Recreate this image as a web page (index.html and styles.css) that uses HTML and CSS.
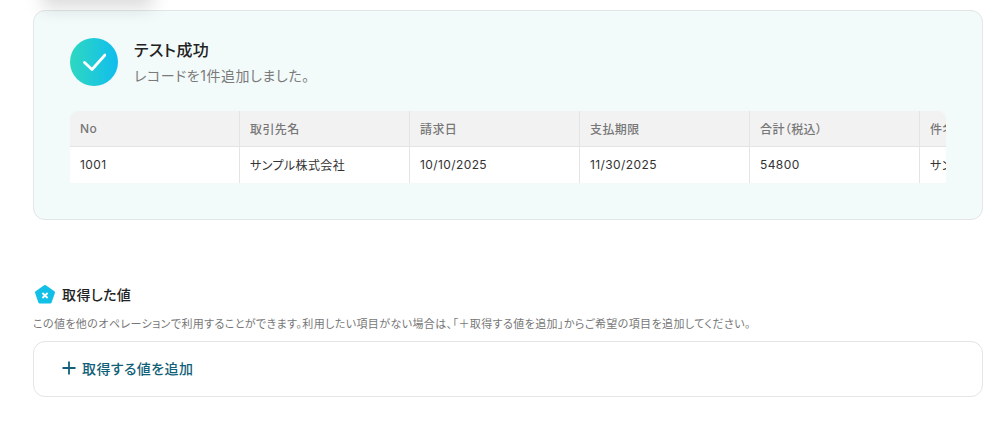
FILE: index.html
```html
<!DOCTYPE html>
<html lang="ja">
<head>
    <meta charset="utf-8">
    <title>取得した値</title>
    <link rel="stylesheet" href="styles.css">
</head>
<body>
    <div class="top-shadow"></div>
    <div class="result-card">
        <div class="result-head">
            <div class="check-icon">
                <svg width="24" height="24" viewBox="0 0 24 24" fill="none">
                    <path d="M2.5 12.5L10 19.5L23 5" stroke="#fff" stroke-width="2.8" stroke-linecap="round" stroke-linejoin="round"/>
                </svg>
            </div>
            <div class="result-text">
                <div class="result-title">テスト成功</div>
                <div class="result-sub">レコードを1件追加しました。</div>
            </div>
        </div>
        <div class="table-wrap">
            <table class="record-table">
                <thead>
                    <tr>
                        <th>No</th>
                        <th>取引先名</th>
                        <th>請求日</th>
                        <th>支払期限</th>
                        <th>合計（税込）</th>
                        <th>件名</th>
                    </tr>
                </thead>
                <tbody>
                    <tr>
                        <td>1001</td>
                        <td>サンプル株式会社</td>
                        <td>10/10/2025</td>
                        <td>11/30/2025</td>
                        <td>54800</td>
                        <td>サンプル</td>
                    </tr>
                </tbody>
            </table>
        </div>
    </div>

    <div class="section-head">
        <svg class="x-icon" width="22" height="22" viewBox="0 0 22 22">
            <path d="M11 3.5L19.5 9.5L16.2 19H5.8L2.5 9.5z" fill="#12bfe6" stroke="#12bfe6" stroke-width="3" stroke-linejoin="round"/>
            <path d="M8.4 10l5.2 5M13.6 10l-5.2 5" stroke="#fff" stroke-width="1.8"/>
        </svg>
        <span class="section-title">取得した値</span>
    </div>
    <p class="section-note">この値を他のオペレーションで利用することができます。利用したい項目がない場合は、「＋取得する値を追加」からご希望の項目を追加してください。</p>
    <div class="add-box">
        <svg width="14" height="14" viewBox="0 0 14 14" fill="none">
            <path d="M7 .5v13M.5 7h13" stroke="#125f78" stroke-width="1.8"/>
        </svg>
        <span class="add-label">取得する値を追加</span>
    </div>
</body>
</html>
```

FILE: styles.css
```css
html, body {
    height: 100%;
}
body {
    margin: 0;
    padding: 10px 20px 0 33px;
    box-sizing: border-box;
    overflow: hidden;
    position: relative;
    background-color: #fff;
    color: #222;
    font-family: "Inter", "Noto Sans CJK JP", sans-serif;
    font-feature-settings: "palt";
}
.top-shadow {
    position: absolute;
    top: -30px;
    left: 50px;
    width: 95px;
    height: 30px;
    box-shadow: 0 0 18px 8px rgba(0, 0, 0, 0.14);
}
.result-card {
    box-sizing: border-box;
    height: 210px;
    padding: 26px 36px 0;
    background-color: #f2fafa;
    border: 1px solid #e2e6e6;
    border-radius: 12px;
}
.result-head {
    display: flex;
    align-items: center;
    gap: 16px;
}
.check-icon {
    width: 48px;
    height: 48px;
    border-radius: 50%;
    display: flex;
    justify-content: center;
    align-items: center;
    background: linear-gradient(90deg, #2fd8c0, #10bdee);
}
.result-title {
    font-size: 16px;
    font-weight: 500;
    line-height: 24px;
    letter-spacing: 0.4px;
    color: #222;
    padding-top: 1px;
}
.result-sub {
    margin-top: 4px;
    font-size: 14px;
    line-height: 20px;
    letter-spacing: 0.55px;
    color: #7a7a7a;
}
.table-wrap {
    width: 876px;
    margin-top: 25px;
    overflow: hidden;
    border-radius: 8px 8px 0 0;
}
.record-table {
    border-collapse: separate;
    border-spacing: 0;
    table-layout: fixed;
    width: 1020px;
    font-size: 12px;
    letter-spacing: 0.4px;
}
.record-table th, .record-table td {
    width: 170px;
    box-sizing: border-box;
    height: 36px;
    padding: 0 10px;
    text-align: left;
    white-space: nowrap;
    border-right: 1px solid #e4e4e4;
}
.record-table th {
    background-color: #f2f2f2;
    border-bottom: 1px solid #e4e4e4;
    color: #777;
    font-weight: 500;
}
.record-table td {
    padding-bottom: 2px;
    background-color: #fff;
    color: #333;
}
.section-head {
    display: flex;
    align-items: center;
    gap: 6px;
    margin-top: 63px;
    margin-left: 1px;
}
.section-title {
    font-size: 14px;
    font-weight: 500;
    letter-spacing: 0.4px;
    color: #222;
}
.section-note {
    margin: 11px 0 0;
    font-size: 11px;
    line-height: 16px;
    letter-spacing: 0.4px;
    color: #777;
    white-space: nowrap;
}
.add-box {
    box-sizing: border-box;
    height: 56px;
    margin-top: 9px;
    padding: 0 0 2px 28px;
    display: flex;
    align-items: center;
    gap: 6px;
    background-color: #fff;
    border: 1px solid #e2e6e6;
    border-radius: 12px;
}
.add-label {
    font-size: 14px;
    font-weight: 500;
    letter-spacing: 0.4px;
    color: #125f78;
}
```
